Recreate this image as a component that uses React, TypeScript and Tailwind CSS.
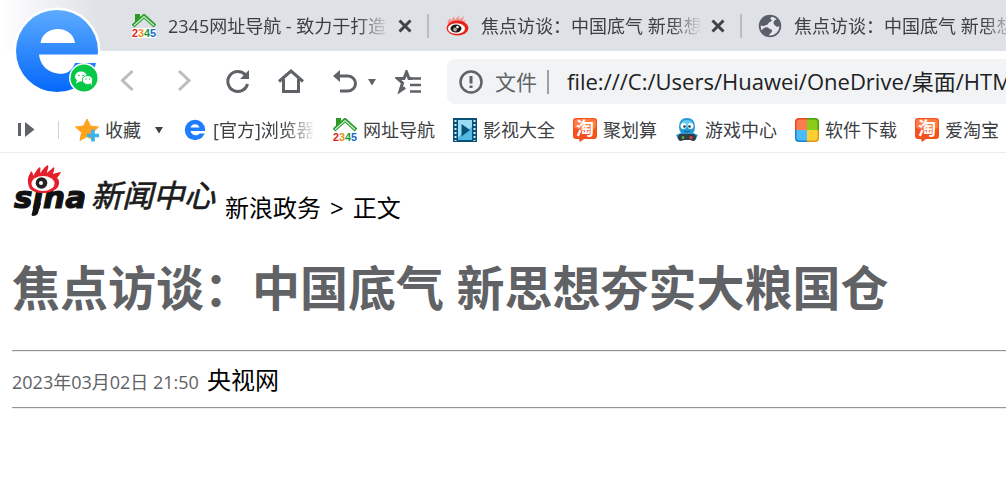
import type { ReactNode } from "react";

interface TabItem {
  title: string;
  icon: ReactNode;
}

interface BookmarkItem {
  label: string;
  icon: ReactNode;
  faded?: boolean;
}

function House2345Icon() {
  return (
    <svg className="size-6 shrink-0" viewBox="0 0 24 24" aria-hidden="true">
      <path d="M3 0h5v6l-5 4z" fill="#2c9a1e" />
      <path d="M1 12L12 2l11 10" fill="none" stroke="#2f9a38" strokeWidth="4" strokeLinejoin="round" />
      <path d="M2 11.500L12 2.500l10 9" fill="none" stroke="#c4edbb" strokeWidth="1.300" />
      <rect y="14" width="24" height="10" fill="#fff" />
      <text x="0" y="22.500" fontFamily="Liberation Sans" fontWeight="700" fontSize="10.800">
        <tspan fill="#e02020">2</tspan>
        <tspan fill="#f08a1c">3</tspan>
        <tspan fill="#169a2c">4</tspan>
        <tspan fill="#1767c8">5</tspan>
      </text>
    </svg>
  );
}

function WeiboEyeIcon() {
  return (
    <svg className="size-6 shrink-0" viewBox="0 0 24 24" aria-hidden="true">
      <path d="M3 10C2 7 4 6 5 4c0 2 1 2 1 3 1-3 3-3 3-5 1 2 0 3 1 4 1-2 4-3 4-5 1 2-1 4 0 5 1-2 4-2 5-4 0 3-2 4-2 5 2 0 3-1 4-1-1 2-3 3-4 4z" fill="#f5908a" />
      <ellipse cx="12.500" cy="14" rx="11" ry="7.500" fill="#e5231b" />
      <ellipse cx="11.500" cy="14.500" rx="8.500" ry="5.300" fill="#fff" />
      <ellipse cx="11" cy="14.500" rx="5.500" ry="4" fill="#1d1717" />
      <circle cx="10" cy="15.500" r="2" fill="#aaa" />
      <circle cx="12.500" cy="13" r="1.300" fill="#fff" />
    </svg>
  );
}

function GlobeIcon() {
  return (
    <svg className="size-6 shrink-0" viewBox="0 0 24 24" aria-hidden="true">
      <circle cx="12" cy="12" r="10.300" fill="#e4e6ea" stroke="#5a5e6b" strokeWidth="1.800" />
      <path d="M7 3l6-1.500c1 2-.5 2.500-1 3.500 2 0 2 1.500 1 2.500-1.500 1-2.500 1-3 2.500-1 1.500-2 .5-3 1.500-2 1-3 .5-5-.5C2 7 4 5 7 3z" fill="#5a5e6b" />
      <path d="M16 7c1.500-1.500 3-2 4.500-1.500 1.500 2 2 4 1.700 6.500-2-.5-2.200 1.500-4 .5-2-1.500-3.500-3.500-2.200-5.500z" fill="#5a5e6b" />
      <path d="M6 14c2-1 4-1 5 .5 2 .5 3.500 1.500 3 3-1 2-2.500 1.500-3 4.500-3-.5-6-2-7.500-5 .5-1.500 1.500-2 2.500-3z" fill="#5a5e6b" />
    </svg>
  );
}

function BrowserEIcon() {
  return (
    <svg className="size-6 shrink-0" viewBox="0 0 24 24" aria-hidden="true">
      <circle cx="12" cy="12" r="10.200" fill="#1e7dfb" />
      <path d="M7.500 9.500C8.500 5 15.500 5 16.500 9.500zM7.500 13h15v2.500h-6C15 18 9 18.500 7.500 13z" fill="#fff" />
    </svg>
  );
}

function FilmIcon() {
  return (
    <svg className="size-6 shrink-0" viewBox="0 0 24 24" aria-hidden="true">
      <rect width="24" height="24" fill="#075078" />
      <rect x="5" y="2" width="14" height="20" fill="#55b8e4" />
      <path d="M5 2h14v7L5 19z" fill="#9bdcf5" />
      <path d="M8.500 6l8.500 6-8.500 6.500z" fill="#075078" />
      <path d="M2.500 2v21M21.500 2v21" stroke="#d7eef8" strokeWidth="2" strokeDasharray="2 2" />
    </svg>
  );
}

function TaobaoIcon() {
  return (
    <svg className="size-6 shrink-0" viewBox="0 0 24 24" aria-hidden="true">
      <path d="M3 0h18q3 0 3 3v15q0 3-3 3H11l-4 3-1-3H3q-3 0-3-3V3q0-3 3-3z" fill="#f4511e" />
      <rect x="1" y="1" width="22" height="10" rx="3" fill="#ff7a42" />
      <text x="3" y="17" fill="#fff" fontFamily="Noto Sans CJK SC" fontWeight="700" fontSize="18">淘</text>
    </svg>
  );
}

function GameIcon() {
  return (
    <svg className="size-6 shrink-0" viewBox="0 0 24 24" aria-hidden="true">
      <path d="M4 9Q4 0 12 0t8 9q0 4-2 6l5 2-2 4H3l-2-4 5-2Q4 12 4 9z" fill="#239ad6" />
      <path d="M6 7Q6 2 12 2t6 5z" fill="#65c9f0" />
      <circle cx="8.500" cy="8" r="3" fill="#fff" />
      <circle cx="15.500" cy="8" r="3" fill="#fff" />
      <circle cx="9.500" cy="8.500" r="1.300" fill="#173a53" />
      <circle cx="14.500" cy="8.500" r="1.300" fill="#173a53" />
      <path d="M9 13q3 2 6 0" stroke="#125a87" fill="none" />
      <path d="M6 16h12q3 0 3 3.500t-3 3.500l-3-1H9l-3 1q-3 0-3-3.500t3-3.500z" fill="#353b42" />
      <circle cx="8" cy="19.500" r="1.300" fill="#3ccf52" />
      <circle cx="16" cy="19.500" r="1.500" fill="#ed4030" />
    </svg>
  );
}

function FourColorIcon() {
  return (
    <svg className="size-6 shrink-0" viewBox="0 0 24 24" aria-hidden="true">
      <path d="M12 0H4Q0 0 0 4v8h12z" fill="#e24a1c" />
      <path d="M12 0h8q4 0 4 4v8H12z" fill="#4e9c0d" />
      <path d="M0 12h12v12H4q-4 0-4-4z" fill="#1683cf" />
      <path d="M12 12h12v8q0 4-4 4h-8z" fill="#dd9710" />
      <path d="M12 1.500H4.500q-3 0-3 3V12H12z" fill="#fc7c4f" />
      <path d="M12 1.500h7.500q3 0 3 3V12H12z" fill="#8ccb18" />
      <path d="M1.500 12H12v10.500H4.500q-3 0-3-3z" fill="#4bbbfa" />
      <path d="M12 12h10.500v7.500q0 3-3 3H12z" fill="#ffd034" />
    </svg>
  );
}

function CaretIcon() {
  return (
    <svg className="h-2 w-3.5" viewBox="0 0 14 8" aria-hidden="true">
      <path d="M3 1h8L7 7.500z" fill="currentColor" />
    </svg>
  );
}

// Round browser logo that overlaps the tab strip and the toolbar
function BrowserLogo() {
  return (
    <svg className="size-[88px]" viewBox="0 0 88 88" aria-hidden="true">
      <defs>
        <linearGradient id="logo-blue" x1="0" y1="0" x2="0" y2="1">
          <stop offset="0" stopColor="#5cabff" />
          <stop offset="1" stopColor="#0468fb" />
        </linearGradient>
      </defs>
      <circle cx="44" cy="44" r="43.500" fill="#fff" />
      <circle cx="44" cy="44" r="41" fill="url(#logo-blue)" />
      <path d="M27.500 36C30 18 59 17 62 36z" fill="#fff" />
      <path d="M26 47.500h62v8.500H62C57 69 47 67 42 66 33 64 27 57 26 47.500z" fill="#fff" />
      <circle cx="71" cy="71" r="15" fill="#fff" />
      <circle cx="71" cy="71" r="13.500" fill="#07c748" />
      <ellipse cx="68" cy="69.500" rx="6" ry="5" fill="#fff" />
      <path d="M64 73l-1 3.500 4-2z" fill="#fff" />
      <ellipse cx="74.500" cy="73" rx="5.200" ry="4.500" fill="#fff" stroke="#07c748" strokeWidth="1" />
      <path d="M77 76l2 2.500-.5-4z" fill="#fff" />
      <circle cx="66" cy="68.500" r=".8" fill="#07c748" />
      <circle cx="70" cy="68.500" r=".8" fill="#07c748" />
      <circle cx="73" cy="72" r=".7" fill="#07c748" />
      <circle cx="76.500" cy="72" r=".7" fill="#07c748" />
    </svg>
  );
}

function SinaNewsLogo() {
  return (
    <svg className="h-[61px] w-[207px]" viewBox="0 0 207 61" role="img" aria-label="sina 新闻中心">
      <text x="2" y="43" className="italic" fill="#111" stroke="#111" strokeWidth="1.200" fontFamily="DejaVu Sans" fontWeight="700" fontSize="31">
        sina
      </text>
      {/* Tail under the i */}
      <path d="M22.500 38h6.500l-3 10q-1 3-5.500 3l-1-1z" fill="#111" />
      <path d="M17 22C14 12 18 10 19 6c2 2 2 3 2 5 3-4 3-6 7-9 1 2 0 4 0 6 3-3 4-6 8-8 1 3-1 5-1 8 3-3 5-4 7-6 1 3-1 5-1 7 3-1 6-2 8-2-1 3-3 4-4 6 2 1 3 5 1 9-3 4-10 6-15 6-7 0-12-2-14-6z" fill="#e4202a" />
      <ellipse cx="31" cy="18.500" rx="11.500" ry="7.500" fill="#fff" />
      <circle cx="29.500" cy="18" r="5.800" fill="#222" />
      <circle cx="29" cy="18" r="2" fill="#fff" />
      <text x="79" y="42" className="italic" fill="#1c1c1c" stroke="#1c1c1c" strokeWidth=".7" fontFamily="Noto Sans CJK SC" fontSize="31">
        新闻中心
      </text>
    </svg>
  );
}

const tabs: TabItem[] = [
  { title: "2345网址导航 - 致力于打造", icon: <House2345Icon /> },
  { title: "焦点访谈：中国底气 新思想", icon: <WeiboEyeIcon /> },
  { title: "焦点访谈：中国底气 新思想", icon: <GlobeIcon /> },
];

const bookmarks: BookmarkItem[] = [
  { label: "[官方]浏览器", icon: <BrowserEIcon />, faded: true },
  { label: "网址导航", icon: <House2345Icon /> },
  { label: "影视大全", icon: <FilmIcon /> },
  { label: "聚划算", icon: <TaobaoIcon /> },
  { label: "游戏中心", icon: <GameIcon /> },
  { label: "软件下载", icon: <FourColorIcon /> },
  { label: "爱淘宝", icon: <TaobaoIcon /> },
];

function Tab({ title, icon }: TabItem) {
  return (
    <div className="flex w-[313px] shrink-0 items-center pl-4">
      {icon}
      <span className="ml-3 flex-1 whitespace-nowrap [mask-image:linear-gradient(to_right,black_calc(100%-32px),transparent)]">
        {title}
      </span>
      <button type="button" aria-label="关闭" className="ml-1.5 flex size-5 items-center justify-center text-[#3f4246]">
        <svg className="size-3.5" viewBox="0 0 14 14" aria-hidden="true">
          <path d="M1.500 1.500l11 11M12.500 1.500l-11 11" stroke="currentColor" strokeWidth="3" />
        </svg>
      </button>
      <span className="ml-3 h-6 w-0.5 bg-[#b9bcc1]" />
    </div>
  );
}

function NavButton({ label, children }: { label: string; children: ReactNode }) {
  return (
    <button type="button" aria-label={label} className="size-6 shrink-0">
      <svg className="size-6 overflow-visible" viewBox="0 0 24 24" fill="none" stroke="currentColor" strokeWidth="3" aria-hidden="true">
        {children}
      </svg>
    </button>
  );
}

export default function App() {
  return (
    <div className="min-h-screen overflow-hidden bg-white font-['Open_Sans','Noto_Sans_CJK_SC',sans-serif] text-lg leading-6 text-[#3c4043]">
      <header className="relative">
        {/* Tab strip */}
        <div className="flex h-[51px] items-center bg-[#dee1e6] bg-linear-to-r from-white to-[#dee1e6] to-10% pl-[116px]">
          {tabs.map((tab, i) => (
            <Tab key={i} {...tab} />
          ))}
        </div>

        {/* Toolbar */}
        <div className="flex h-[57px] items-center pt-1 pl-[117px] text-[#5f6368]">
          <nav className="flex shrink-0 gap-[30px]">
            <NavButton label="后退">
              <path d="M15.500 1L5.500 10.500l10 9.500" stroke="#babcbe" />
            </NavButton>
            <NavButton label="前进">
              <path d="M8 1l10 9.500L8 20" stroke="#babcbe" />
            </NavButton>
            <NavButton label="刷新">
              <path d="M20.500 5A10 10 0 1 0 22.500 14" />
              <path d="M24 0v9h-9z" fill="currentColor" stroke="none" />
            </NavButton>
            <NavButton label="主页">
              <path d="M0 11.500L12 1l12 10.500M4.500 9v12.500h15V9" />
            </NavButton>
            <NavButton label="撤销">
              <path d="M4 6h11a7.500 7.500 0 0 1 0 15H7" />
              <path d="M0 6L7 0v12z" fill="currentColor" stroke="none" />
            </NavButton>
          </nav>
          <button type="button" aria-label="更多" className="ml-2 flex w-3.5 shrink-0 justify-center">
            <CaretIcon />
          </button>
          <button type="button" aria-label="收藏夹" className="ml-4 w-[26px] shrink-0">
            <svg className="h-6 w-[26px]" viewBox="0 0 26 24" fill="none" stroke="currentColor" strokeWidth="2.500" aria-hidden="true">
              <path d="M17 8.500h-3L11.500 2 9 8.500H2.500l5 4.500L5 21l5-3.500" strokeWidth="3" />
              <path d="M15 8.500h11M15 15h11M15 21.500h11" />
            </svg>
          </button>
          <div className="ml-[26px] flex h-[45px] min-w-0 flex-1 items-center rounded-l-lg bg-[#f1f3f4] pl-3 text-[21px]">
            <svg className="size-6 shrink-0" viewBox="0 0 24 24" fill="none" stroke="currentColor" strokeWidth="2.500" aria-hidden="true">
              <circle cx="12" cy="12" r="10.500" />
              <path d="M12 6v7.500M12 15.500v2.500" strokeWidth="3" />
            </svg>
            <label htmlFor="address" className="ml-3 shrink-0">
              文件
            </label>
            <span className="ml-2.5 h-6 w-0.5 shrink-0 bg-[#9da0a3]" />
            <input
              id="address"
              type="text"
              defaultValue="file:///C:/Users/Huawei/OneDrive/桌面/HTML"
              className="ml-[18px] h-8 min-w-0 flex-1 pb-1 text-[22px] text-[#202124] outline-none"
            />
          </div>
        </div>

        {/* Bookmarks */}
        <div className="flex h-[45px] items-center border-b border-[#ececee] pl-3.5 whitespace-nowrap">
          <button type="button" aria-label="侧边栏" className="size-6 shrink-0 text-[#5f6368]">
            <svg className="size-6" viewBox="0 0 24 24" fill="currentColor" aria-hidden="true">
              <path d="M4 5h3v13H4zM11 4l9.500 7.500L11 19z" />
            </svg>
          </button>
          <span className="ml-5 h-[18px] w-px shrink-0 bg-[#d0d2d5]" />
          <button type="button" className="ml-4 flex shrink-0 items-center gap-1.5">
            <svg className="size-6" viewBox="0 0 24 24" aria-hidden="true">
              <path d="M12 1l3.500 7 8 1-6 5.500 1.500 8-7-4-7 4 1.500-8-6-5.500 8-1z" fill="#ffa31f" stroke="#ffa31f" strokeLinejoin="round" />
              <path d="M18 11.500v12M12 17.500h12" stroke="#34b3ef" strokeWidth="3.500" />
            </svg>
            收藏
          </button>
          <button type="button" aria-label="展开收藏" className="ml-[11px] flex w-3.5 shrink-0 justify-center">
            <CaretIcon />
          </button>
          <nav className="ml-[17px] flex gap-[18px]">
            {bookmarks.map(({ label, icon, faded }) => (
              <a key={label} href="#" className="flex shrink-0 items-center gap-1.5">
                {icon}
                {faded ? (
                  <span className="w-[102px] [mask-image:linear-gradient(to_right,black_calc(100%-32px),transparent)]">
                    {label}
                  </span>
                ) : (
                  <span>{label}</span>
                )}
              </a>
            ))}
          </nav>
        </div>

        <div className="absolute top-[7px] left-[13px]">
          <BrowserLogo />
        </div>
      </header>

      <main className="pt-3 pl-3">
        <div className="flex items-end gap-1.5">
          <a href="#">
            <SinaNewsLogo />
          </a>
          <p className="flex gap-[9px] text-2xl leading-9 text-black">
            <a href="#">新浪政务</a>
            <span>&gt;</span>
            <span>正文</span>
          </p>
        </div>
        <h1 className="my-[30px] text-5xl leading-[64px] font-bold text-[#606266]">
          焦点访谈：中国底气 新思想夯实大粮国仓
        </h1>
        <hr className="h-0.5 border-t border-b border-t-[#949494] border-b-[#ececec]" />
        <p className="flex items-baseline gap-2 text-2xl leading-[55px] text-black">
          <time className="text-lg text-[#606266]">2023年03月02日 21:50</time>
          <a href="#">央视网</a>
        </p>
        <hr className="h-0.5 border-t border-b border-t-[#949494] border-b-[#ececec]" />
      </main>
    </div>
  );
}
